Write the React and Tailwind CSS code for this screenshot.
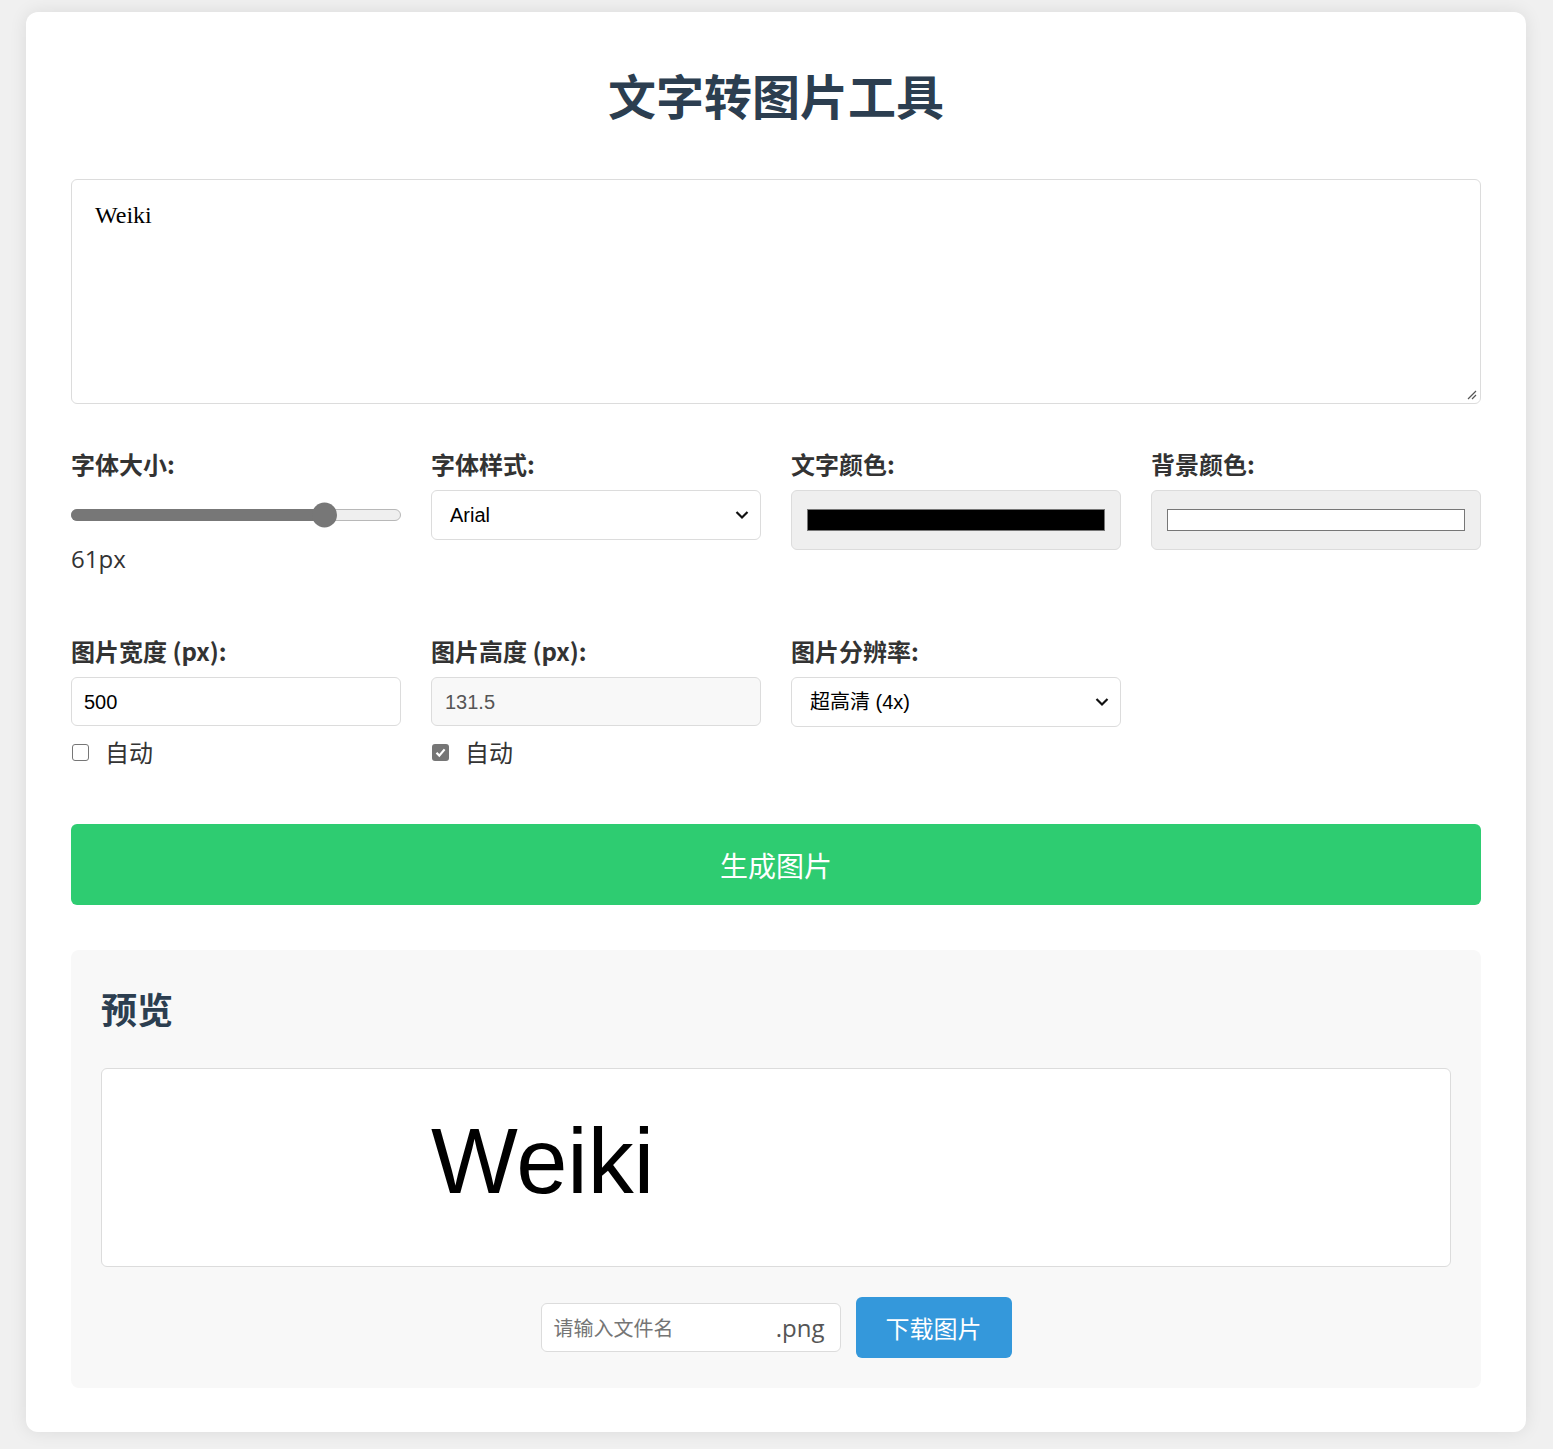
import React from "react";

const CJK = { fontFamily: '"Noto Sans CJK SC", "Noto Sans", sans-serif' };
const ARIAL = { fontFamily: '"Liberation Sans", Arial, "Noto Sans CJK SC", sans-serif' };

function Chevron() {
  return (
    <svg className="pointer-events-none absolute right-[11px] top-1/2 -translate-y-1/2" width="14" height="9" viewBox="0 0 14 9">
      <path d="M1.5 1.5 L7 7 L12.5 1.5" fill="none" stroke="#111" strokeWidth="2.2" />
    </svg>
  );
}

function Label({ children }) {
  return (
    <div className="mb-[10px] text-[24px] leading-[32px] font-bold text-[#333]" style={CJK}>
      {children}
    </div>
  );
}

function Checkbox({ checked, label }) {
  return (
    <div className="mt-[10px] flex h-[32px] items-center">
      {checked ? (
        <span className="ml-[1px] flex h-[17px] w-[17px] items-center justify-center rounded-[3px] bg-[#767676]">
          <svg width="13" height="13" viewBox="0 0 13 13">
            <path d="M2.5 6.8 L5.3 9.6 L10.6 3.4" fill="none" stroke="#fff" strokeWidth="2.2" />
          </svg>
        </span>
      ) : (
        <span className="ml-[1px] h-[17px] w-[17px] rounded-[3px] border-[1.5px] border-[#767676] bg-white" />
      )}
      <span className="ml-[16px] text-[24px] text-[#333]" style={CJK}>{label}</span>
    </div>
  );
}

export default function App() {
  return (
    <div className="min-h-[1449px] bg-[#f0f0f0] pt-[12px] pb-[17px]">
      <div className="ml-[26px] w-[1500px] rounded-[12px] bg-white px-[45px] pt-[53px] pb-[44px] shadow-[0_0_18px_rgba(0,0,0,0.09)]">
        <h1 className="mb-[56px] text-center text-[48px] leading-[58px] font-bold text-[#2c3e50]" style={CJK}>
          文字转图片工具
        </h1>

        <div className="relative h-[225px] w-full rounded-[6px] border border-[#dcdcdc] px-[23px] pt-[20px]">
          <div className="text-[24px] leading-[30px] text-black" style={{ fontFamily: '"Liberation Serif", serif' }}>
            Weiki
          </div>
          <svg className="absolute right-[2px] bottom-[2px]" width="12" height="12" viewBox="0 0 12 12">
            <path d="M2 10 L10 2 M6 10 L10 6" stroke="#555" strokeWidth="1.2" />
          </svg>
        </div>

        <div className="mt-[44px] grid grid-cols-4 gap-x-[30px]">
          <div>
            <Label>字体大小:</Label>
            <div className="relative flex h-[50px] items-center">
              <div className="relative h-[12px] w-full rounded-full border border-[#b8b8b8] bg-[#efefef]">
                <div className="absolute top-[-1px] left-[-1px] h-[12px] w-[252px] rounded-full bg-[#777]" />
                <div className="absolute top-1/2 left-[240px] h-[25px] w-[25px] -translate-y-1/2 rounded-full bg-[#777]" />
              </div>
            </div>
            <div className="mt-[3px] text-[24px] leading-[32px] text-[#333]" style={{ fontFamily: '"Open Sans", "Noto Sans", sans-serif' }}>
              61px
            </div>
          </div>
          <div>
            <Label>字体样式:</Label>
            <div className="relative flex h-[50px] items-center rounded-[6px] border border-[#dcdcdc] bg-white pl-[18px] text-[20px] text-black" style={ARIAL}>
              Arial
              <Chevron />
            </div>
          </div>
          <div>
            <Label>文字颜色:</Label>
            <div className="flex h-[60px] items-center rounded-[6px] border border-[#dcdcdc] bg-[#efefef] px-[15px]">
              <div className="h-[22px] w-full border border-[#777] bg-black" />
            </div>
          </div>
          <div>
            <Label>背景颜色:</Label>
            <div className="flex h-[60px] items-center rounded-[6px] border border-[#dcdcdc] bg-[#efefef] px-[15px]">
              <div className="h-[22px] w-full border border-[#777] bg-white" />
            </div>
          </div>
        </div>

        <div className="mt-[60px] grid grid-cols-4 gap-x-[30px]">
          <div>
            <Label>图片宽度 (px):</Label>
            <div className="flex h-[49px] items-center rounded-[6px] border border-[#dcdcdc] bg-white pl-[12px] text-[20px] text-black" style={ARIAL}>
              500
            </div>
            <Checkbox checked={false} label="自动" />
          </div>
          <div>
            <Label>图片高度 (px):</Label>
            <div className="flex h-[49px] items-center rounded-[6px] border border-[#dcdcdc] bg-[#f8f8f8] pl-[13px] text-[20px] text-[#555]" style={ARIAL}>
              131.5
            </div>
            <Checkbox checked={true} label="自动" />
          </div>
          <div>
            <Label>图片分辨率:</Label>
            <div className="relative flex h-[50px] items-center rounded-[6px] border border-[#dcdcdc] bg-white pl-[18px] text-[20px] text-black" style={ARIAL}>
              超高清 (4x)
              <Chevron />
            </div>
          </div>
          <div />
        </div>

        <button className="mt-[56px] flex h-[81px] w-full items-center justify-center rounded-[6px] bg-[#2ecc71] text-[28px] text-white" style={CJK}>
          生成图片
        </button>

        <div className="mt-[45px] rounded-[8px] bg-[#f8f8f8] px-[30px] pt-[36px] pb-[30px]">
          <h2 className="mb-[38px] text-[36px] leading-[44px] font-bold text-[#2c3e50]" style={CJK}>
            预览
          </h2>
          <div className="h-[199px] rounded-[6px] border border-[#dcdcdc] bg-white pl-[329px] pt-[46px]">
            <div className="text-[92px] leading-[92px] text-black" style={{ fontFamily: '"Liberation Sans", Arial, sans-serif' }}>
              Weiki
            </div>
          </div>
          <div className="mt-[30px] flex items-center justify-center gap-[15px]">
            <div className="flex h-[49px] w-[300px] items-center justify-between rounded-[6px] border border-[#dcdcdc] bg-white pr-[15px] pl-[12px]">
              <span className="text-[20px] text-[#757575]" style={CJK}>请输入文件名</span>
              <span className="text-[24px] text-[#555]" style={{ fontFamily: '"Open Sans", "Noto Sans", sans-serif' }}>.png</span>
            </div>
            <button className="flex h-[61px] w-[156px] items-center justify-center rounded-[6px] bg-[#3498db] text-[24px] text-white" style={CJK}>
              下载图片
            </button>
          </div>
        </div>
      </div>
    </div>
  );
}
